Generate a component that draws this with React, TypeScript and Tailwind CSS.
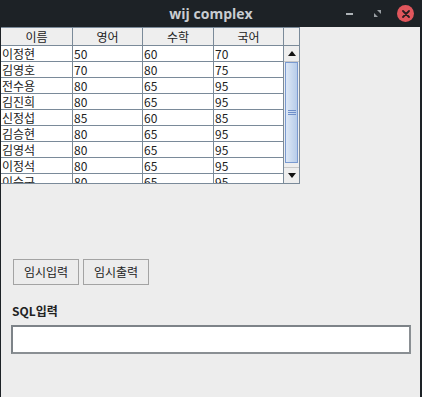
const rows = [
  ["이정현", "50", "60", "70"],
  ["김영호", "70", "80", "75"],
  ["전수용", "80", "65", "95"],
  ["김진희", "80", "65", "95"],
  ["신정섭", "85", "60", "85"],
  ["김승현", "80", "65", "95"],
  ["김영석", "80", "65", "95"],
  ["이정석", "80", "65", "95"],
  ["이승구", "80", "65", "95"],
];

const widths = ["w-[72px]", "w-[70px]", "w-[71px]", "w-[70px]"];
const heads = ["이름", "영어", "수학", "국어"];

export default function App() {
  return (
    <div className="w-[422px] h-[397px] bg-[#1d2226] flex flex-col overflow-hidden" style={{ fontFamily: '"Noto Sans CJK KR", "Noto Sans", sans-serif' }}>
      {/* title bar */}
      <div className="h-[27px] shrink-0 flex items-center relative">
        <div className="flex-1 text-center text-[14px] font-bold text-[#c9cdd1] leading-none" style={{ fontFamily: '"Open Sans", "Noto Sans", sans-serif' }}>
          wij complex
        </div>
        <div className="absolute right-[8px] top-[5px] flex items-center gap-[12px]">
          <div className="w-[16px] h-[16px] flex items-center justify-center">
            <div className="w-[7px] h-[2px] bg-[#aeb3b7]" />
          </div>
          <div className="w-[16px] h-[16px] flex items-center justify-center">
            <svg width="9" height="9" viewBox="0 0 9 9">
              <path d="M4 1h4v4z" fill="#9aa0a4" />
              <path d="M1 4v4h4z" fill="#9aa0a4" />
            </svg>
          </div>
          <div className="w-[17px] h-[17px] rounded-full bg-[#e0565c] flex items-center justify-center">
            <svg width="8" height="8" viewBox="0 0 8 8">
              <path d="M1 1L7 7M7 1L1 7" stroke="#2a1e20" strokeWidth="1.8" strokeLinecap="round" />
            </svg>
          </div>
        </div>
      </div>

      {/* content */}
      <div className="flex-1 ml-[1px] mr-[2px] bg-[#ededed] flex flex-col">
        {/* table */}
        <div className="w-[299px] flex flex-col">
          <div className="h-[19px] flex border-y border-[#7a8a99] bg-[#eeeeee]">
            {heads.map((h, i) => (
              <div key={h} className={`${widths[i]} border-r border-[#7a8a99] text-[12px] text-[#222] text-center leading-[17px]`}>
                {h}
              </div>
            ))}
            <div className="w-[16px] border-r border-[#7a8a99]" />
          </div>
          <div className="h-[138px] flex border-b border-[#7a8a99]">
            <div className="w-[283px] overflow-hidden bg-white">
              {rows.map((r, ri) => (
                <div key={ri} className="h-[16px] flex border-b border-[#7a8a99]">
                  {r.map((c, ci) => (
                    <div key={ci} className={`${widths[ci]} border-r border-[#7a8a99] text-[12px] text-[#222] pl-[1px] leading-[15px]`}>
                      {c}
                    </div>
                  ))}
                </div>
              ))}
            </div>
            <div className="w-[16px] flex flex-col bg-[#eeeeee] border-r border-[#7a8a99]">
              <div className="h-[16px] flex items-center justify-center border-b border-[#c8c8c8]">
                <svg width="8" height="5" viewBox="0 0 8 5">
                  <path d="M0 5L4 0L8 5z" fill="#111" />
                </svg>
              </div>
              <div className="h-[101px] mx-[1px] border border-[#7a9ad0] bg-gradient-to-r from-[#dde8f6] to-[#b7cce9] flex items-center justify-center">
                <div className="flex flex-col gap-[1px]">
                  <div className="w-[8px] h-[1px] bg-[#6f8fc9]" />
                  <div className="w-[8px] h-[1px] bg-[#6f8fc9]" />
                  <div className="w-[8px] h-[1px] bg-[#6f8fc9]" />
                </div>
              </div>
              <div className="flex-1" />
              <div className="h-[16px] flex items-center justify-center border-t border-[#c8c8c8]">
                <svg width="8" height="5" viewBox="0 0 8 5">
                  <path d="M0 0L4 5L8 0z" fill="#111" />
                </svg>
              </div>
            </div>
          </div>
        </div>

        {/* buttons */}
        <div className="flex gap-[4px] ml-[12px] mt-[75px]">
          <button className="w-[66px] h-[26px] border border-[#a3a3a3] bg-[#ececec] text-[12px] text-[#222]">임시입력</button>
          <button className="w-[66px] h-[26px] border border-[#a3a3a3] bg-[#ececec] text-[12px] text-[#222]">임시출력</button>
        </div>

        {/* sql */}
        <div className="ml-[11px] mt-[19px] text-[12px] font-bold text-[#222] leading-[14px]">SQL입력</div>
        <div className="ml-[10px] mt-[7px] w-[400px] h-[29px] bg-white border-2 border-[#7d8388] border-b-[#8a8f93] border-r-[#8a8f93]" />
      </div>
    </div>
  );
}
